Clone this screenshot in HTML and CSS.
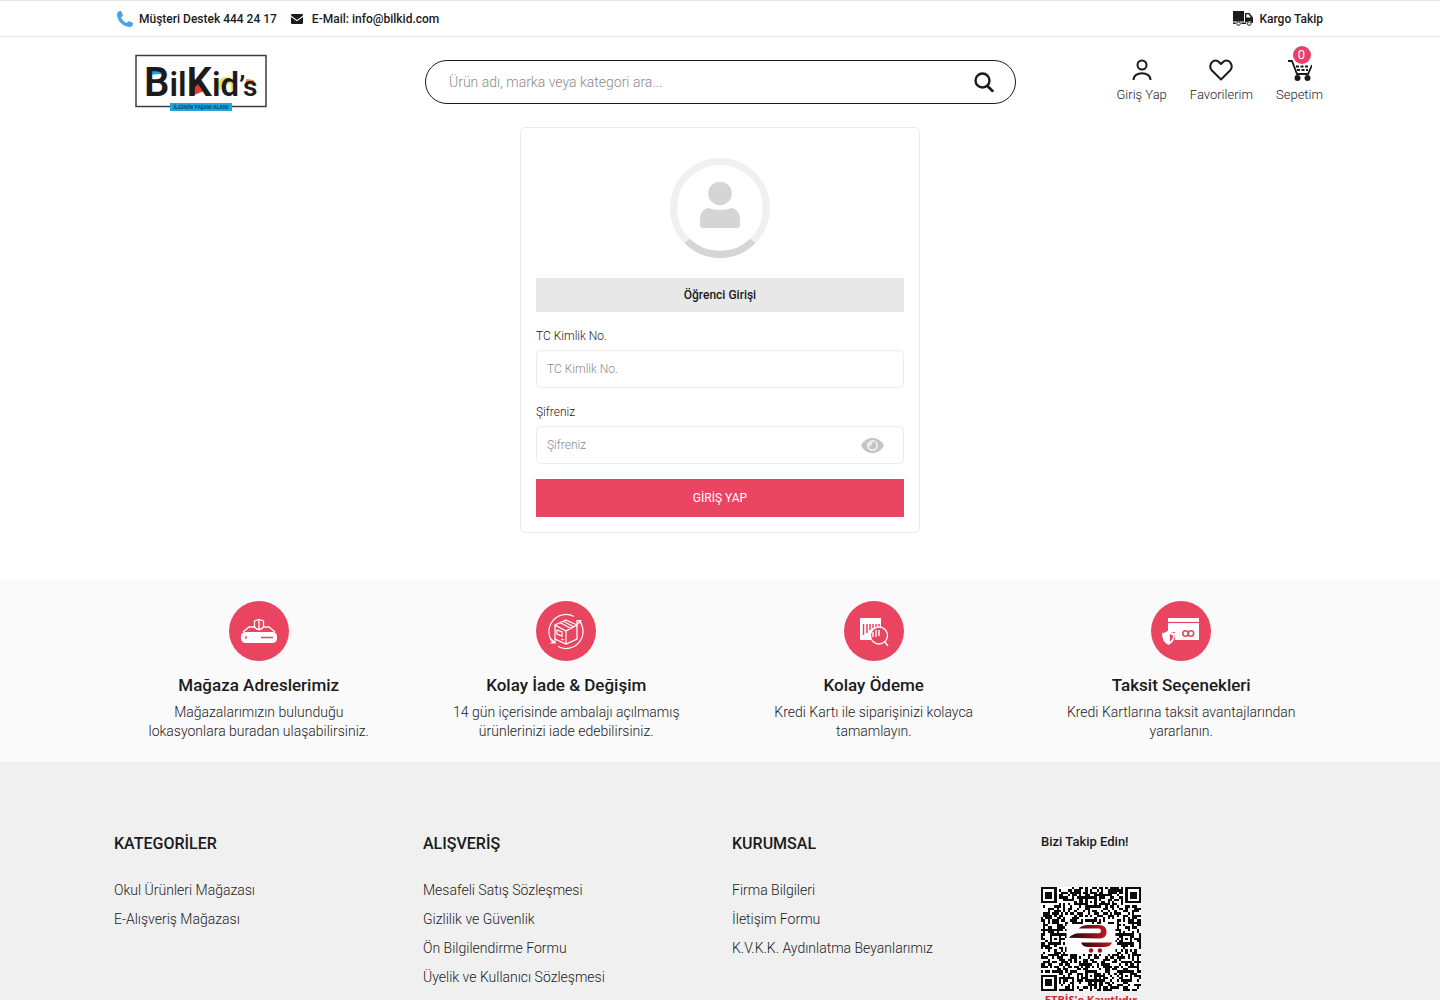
FILE: index.html
```html
<!DOCTYPE html>
<html lang="tr">
<head>
<meta charset="utf-8">
<meta name="viewport" content="width=device-width, initial-scale=1">
<title>BilKid's - Öğrenci Girişi</title>
<link rel="stylesheet" href="styles.css">
</head>
<body>
<div class="topbar">
  <div class="container topbar-inner">
    <a class="top-link" href="#">
      <svg width="16" height="16" viewBox="0 0 16 16" aria-hidden="true"><path d="M2.2.3C.8.9.1 2.100 0 3.500.2 9.900 6 15.600 12.400 16c1.500 0 2.700-.7 3.300-2.100l.3-1.100c.1-.5-.1-.8-.5-1l-3.300-1.500c-.4-.2-.8-.1-1.100.3l-1.400 1.500C7.300 11.100 5 8.800 4.100 6.400l1.500-1.300c.3-.3.4-.7.3-1.100L4.400.6C4.200.1 3.800-.1 3.300.1z" fill="#49a1ec"/></svg>
      <span>Müşteri Destek 444 24 17</span>
    </a>
    <a class="top-link top-mail" href="#">
      <svg width="12" height="10" viewBox="0 0 12 10" aria-hidden="true"><path d="M1 0h10a1 1 0 0 1 1 1v.5L6 6 0 1.500V1a1 1 0 0 1 1-1zM0 2.900l6 4.400 6-4.400V9a1 1 0 0 1-1 1H1a1 1 0 0 1-1-1z" fill="#1b1b1d"/></svg>
      <span>E-Mail: info@bilkid.com</span>
    </a>
    <a class="top-link top-cargo" href="#">
      <svg width="20" height="15" viewBox="0 0 20 15" aria-hidden="true"><path d="M0 0h11v10.500H0zM12 2h4.500L20 6.500V12h-1.300a2.500 2.500 0 0 0-4.400-1H12zM13.300 3.300v3.200h4.500l-2-3.200zM0 11.500h3l-.6 1.500H0zM8 11.500h5.500L13 13H8.600z" fill="#1b1b1d" fill-rule="evenodd"/><circle cx="5.500" cy="12.600" r="1.800" fill="#fff" stroke="#1b1b1d"/><circle cx="16.200" cy="12.600" r="1.800" fill="#fff" stroke="#1b1b1d"/></svg>
      <span>Kargo Takip</span>
    </a>
  </div>
</div>

<header class="container header">
  <a class="logo" href="#" aria-label="BilKid's">
    <svg width="132" height="57" viewBox="0 0 132 57" aria-hidden="true">
      <rect x="1" y="1.500" width="130" height="51" fill="#fff" stroke="#3d3d3f" stroke-width="1.500"/>
      <path d="M14 15q6-2 12 0v5l-12 1z" fill="#1ba7dc"/>
      <path d="M59 24l10 13-10 4z" fill="#e23a34"/>
      <circle cx="91" cy="31" r="8" fill="#f1e34a"/>
      <path d="M85 37q3-7 11-7v6l-6 5z" fill="#fff"/>
      <path d="M111 25l8 1-1 5-7-1z" fill="#f08a2c"/>
      <text class="logo-word" x="9" y="42"><tspan class="logo-cap">B</tspan>il<tspan class="logo-cap">K</tspan>id<tspan class="logo-end">’s</tspan></text>
      <rect x="35" y="49" width="62" height="8" fill="#1ba7dc"/>
      <text class="logo-tag" x="66" y="55" text-anchor="middle">İLGİNİN YAŞAM ALANI</text>
    </svg>
  </a>
  <form class="search">
    <input class="search-input" type="text" aria-label="Ürün ara" placeholder="Ürün adı, marka veya kategori ara...">
    <button class="search-button" type="button" aria-label="Ara">
      <svg width="20" height="20" viewBox="0 0 20 20" fill="none" stroke="#1b1b1d" aria-hidden="true"><circle cx="8.500" cy="8.500" r="7" stroke-width="2.400"/><path d="M13.500 14l5 5" stroke-width="2.600" stroke-linecap="round"/></svg>
    </button>
  </form>
  <nav class="actions">
    <a class="action" href="#">
      <svg width="20" height="22" viewBox="0 0 20 22" fill="none" stroke="#1b1b1d" stroke-width="2" aria-hidden="true"><circle cx="10" cy="6" r="4.500"/><path d="M1.500 21c0-9 17-9 17 0"/></svg>
      <span>Giriş Yap</span>
    </a>
    <a class="action" href="#">
      <svg width="24" height="22" viewBox="0 0 24 22" fill="none" stroke="#1b1b1d" stroke-width="2" stroke-linejoin="round" aria-hidden="true"><path d="M12 20.500L3.200 11.800C-1.500 6.500 3.800-1 9.600 2.700L12 5l2.400-2.300c5.800-3.700 11.100 3.800 6.400 9.100z"/></svg>
      <span>Favorilerim</span>
    </a>
    <a class="action" href="#">
      <span class="badge">0</span>
      <svg width="24" height="22" viewBox="0 0 24 22" fill="none" stroke="#1b1b1d" stroke-width="2" aria-hidden="true"><path d="M0 2h4l5 13h11l4-9" stroke-width="1.800"/><path d="M8 7.500h13M9 11h11" stroke-dasharray="3 1.500"/><circle cx="9.500" cy="19" r="2" fill="#1b1b1d"/><circle cx="19.500" cy="19" r="2" fill="#1b1b1d"/></svg>
      <span>Sepetim</span>
    </a>
  </nav>
</header>

<main class="login">
  <form class="card">
    <svg class="avatar" width="100" height="100" viewBox="0 0 100 100" aria-hidden="true">
      <circle cx="50" cy="50" r="46.500" fill="none" stroke="#f0f0f0" stroke-width="7"/>
      <path d="M17.100 82.900a46.500 46.500 0 0 0 65.800 0" fill="none" stroke="#d5d5d5" stroke-width="7"/>
      <circle cx="50" cy="35.500" r="11.800" fill="#d5d5d5"/>
      <path d="M38 50c4 1 7 2 12 2s8-1 12-2c5 1 8 6 8 11v6q0 3-3 3H33q-3 0-3-3v-6c0-5 3-10 8-11z" fill="#d5d5d5"/>
    </svg>
    <h1 class="card-title">Öğrenci Girişi</h1>
    <label class="label" for="tc">TC Kimlik No.</label>
    <input class="input" id="tc" type="text" placeholder="TC Kimlik No.">
    <label class="label" for="pass">Şifreniz</label>
    <div class="password">
      <input class="input" id="pass" type="password" placeholder="Şifreniz">
      <button class="eye" type="button" aria-label="Şifreyi göster">
        <svg width="23" height="15" viewBox="0 0 23 15" aria-hidden="true"><path d="M0 7.500C5-2.500 18-2.500 23 7.500 18 17.500 5 17.500 0 7.500z" fill="#c4c4c4"/><circle cx="11.500" cy="7.500" r="4.700" fill="#c4c4c4" stroke="#fff" stroke-width="1.300"/><path d="M8.800 8a2.800 2.800 0 0 1 2.500-3" fill="none" stroke="#fff" stroke-width="1.300"/></svg>
      </button>
    </div>
    <button class="submit" type="button">GİRİŞ YAP</button>
  </form>
</main>

<section class="features">
  <div class="container features-grid">
    <article class="feature">
      <svg width="60" height="60" viewBox="0 0 60 60" aria-hidden="true"><circle cx="30" cy="30" r="30" fill="#e94560"/><rect x="12" y="31" width="36" height="11" rx="4.500" fill="#fff"/><path d="M14 31l6-5h5M35 26h5l6 5M30 18.500l4.500 1.500v6q-2 2.500-4.500 2.500t-4.500-2.500v-6zM30 18v11" fill="none" stroke="#fff" stroke-width="1.300"/><path d="M32 36.500h12M17 35v3" stroke="#e94560" stroke-width="1.400"/></svg>
      <h2 class="feature-title">Mağaza Adreslerimiz</h2>
      <p class="feature-text">Mağazalarımızın bulunduğu<br>lokasyonlara buradan ulaşabilirsiniz.</p>
    </article>
    <article class="feature">
      <svg width="60" height="60" viewBox="0 0 60 60" fill="none" stroke="#fff" stroke-width="1.200" aria-hidden="true"><circle cx="30" cy="30" r="30" fill="#e94560" stroke="none"/><path d="M38 15.500a17 17 0 0 0-21 26M22 45.500a17 17 0 0 0 21-26M41 24v-4.500h4.500M41 23l4-3M19 37v5h-4.500M15 38l4 4"/><path d="M30 19l11 5-11 6-11-6zM19 24v14l11 5 11-5V24M30 30v13M24 21.500l11 6M27 20l11 6M21 29l5 2v4l-5-2zM25 38l3 1"/></svg>
      <h2 class="feature-title">Kolay İade &amp; Değişim</h2>
      <p class="feature-text">14 gün içerisinde ambalajı açılmamış<br>ürünlerinizi iade edebilirsiniz.</p>
    </article>
    <article class="feature">
      <svg width="60" height="60" viewBox="0 0 60 60" aria-hidden="true"><circle cx="30" cy="30" r="30" fill="#e94560"/><path d="M16 17h21v22H16z" fill="#fff"/><path d="M19.500 23v11M23 23v9M26 23v6M29 23v4M32 23v3M35 23v3" stroke="#e94560" stroke-width="1.500"/><circle cx="35" cy="34.500" r="8.500" fill="#e94560" stroke="#fff" stroke-width="1.300"/><path d="M29 31v5M32 29v7M35 29v6M41 41l3 4" stroke="#fff" stroke-width="1.400"/></svg>
      <h2 class="feature-title">Kolay Ödeme</h2>
      <p class="feature-text">Kredi Kartı ile siparişinizi kolayca<br>tamamlayın.</p>
    </article>
    <article class="feature">
      <svg width="60" height="60" viewBox="0 0 60 60" aria-hidden="true"><circle cx="30" cy="30" r="30" fill="#e94560"/><path d="M17 17h31v22H24V31H17z" fill="#fff"/><path d="M17 21.500h31" stroke="#e94560" stroke-width="1.200"/><path d="M11 32q4 0 6.500-3 2.500 3 6.500 3 0 9-6.500 12Q11 41 11 32z" fill="#fff"/><path d="M19 33l3 1.500q0 4-3 6z" fill="#e94560"/><g fill="none" stroke="#e94560" stroke-width="1.600"><circle cx="34.500" cy="32.500" r="2.700"/><circle cx="40" cy="32.500" r="2.700"/></g></svg>
      <h2 class="feature-title">Taksit Seçenekleri</h2>
      <p class="feature-text">Kredi Kartlarına taksit avantajlarından<br>yararlanın.</p>
    </article>
  </div>
</section>

<footer class="footer">
  <div class="container footer-grid">
    <section>
      <h3 class="footer-title">KATEGORİLER</h3>
      <ul class="links">
        <li><a href="#">Okul Ürünleri Mağazası</a></li>
        <li><a href="#">E-Alışveriş Mağazası</a></li>
      </ul>
    </section>
    <section>
      <h3 class="footer-title">ALIŞVERİŞ</h3>
      <ul class="links">
        <li><a href="#">Mesafeli Satış Sözleşmesi</a></li>
        <li><a href="#">Gizlilik ve Güvenlik</a></li>
        <li><a href="#">Ön Bilgilendirme Formu</a></li>
        <li><a href="#">Üyelik ve Kullanıcı Sözleşmesi</a></li>
      </ul>
    </section>
    <section>
      <h3 class="footer-title">KURUMSAL</h3>
      <ul class="links">
        <li><a href="#">Firma Bilgileri</a></li>
        <li><a href="#">İletişim Formu</a></li>
        <li><a href="#">K.V.K.K. Aydınlatma Beyanlarımız</a></li>
      </ul>
    </section>
    <section>
      <h3 class="follow-title">Bizi Takip Edin!</h3>
      <a class="etbis" href="#" aria-label="ETBİS'e Kayıtlıdır">
        <svg width="100" height="104" viewBox="0 0 45 45" preserveAspectRatio="none" aria-hidden="true">
          <defs><linearGradient id="cart"><stop offset="0" stop-color="#1d0b0d"/><stop offset="1" stop-color="#c3151f"/></linearGradient></defs>
          <rect width="45" height="45" fill="#fff"/>
          <path id="qr" fill="#0b0b0b" shape-rendering="crispEdges"/>
          <rect x="11.500" y="16" width="22" height="13" fill="#fff"/>
          <path d="M12.500 22q2-2 4.500-2h9q1 0 1-1t-1-1h-9q1.500-1.600 4-1.600h5q3.500 0 3.500 3T26 22.300z" fill="url(#cart)"/>
          <path d="M18 24h14q-1 2-3.500 2H21q-2 0-3-2z" fill="url(#cart)"/>
          <circle cx="22.500" cy="27.500" r="1" fill="#a3141d"/><circle cx="26.500" cy="27.500" r="1" fill="#a3141d"/>
        </svg>
        <span class="etbis-text">ETBİS'e Kayıtlıdır</span>
      </a>
    </section>
  </div>
</footer>
<script src="qr.js"></script>
</body>
</html>
```
FILE: styles.css
```css
* { box-sizing: border-box; }

body {
  margin: 0;
  background: #fff;
  color: #1b1b1d;
  font-family: Roboto, "Liberation Sans", sans-serif;
  font-size: 14px;
  line-height: 20px;
}

a { color: inherit; text-decoration: none; }
svg { display: block; flex: none; }
h1, h2, h3, p, ul { margin: 0; padding: 0; }
ul { list-style: none; }
input, button { font: inherit; }
button { border: 0; padding: 0; background: none; cursor: pointer; }

.container {
  width: 100%;
  max-width: 1230px;
  margin: 0 auto;
  padding: 0 12px;
}

/* Top bar */
.topbar {
  border-top: 1px solid #e6e6e6;
  border-bottom: 1px solid #e6e6e6;
}
.topbar-inner {
  display: flex;
  align-items: center;
  gap: 14px;
  height: 35px;
  font-size: 12px;
  font-weight: 500;
}
.top-link { display: flex; align-items: center; gap: 6px; }
.top-mail { gap: 9px; }
.top-cargo { margin-left: auto; }

/* Header */
.header {
  display: grid;
  grid-template-columns: 308px minmax(0, 591px) 1fr;
  align-items: center;
  height: 90px;
}
.logo { padding-left: 18px; }
.logo-word { font: 600 33px Roboto, sans-serif; fill: #1b1b1d; }
.logo-cap { font-size: 40px; }
.logo-end { font-size: 28px; }
.logo-tag { font: 700 5px "Open Sans", sans-serif; fill: #17405c; }

.search {
  display: flex;
  align-items: center;
  height: 44px;
  border: 1px solid #1b1b1d;
  border-radius: 22px;
  padding: 0 21px 0 23px;
}
.search-input {
  flex: 1;
  min-width: 0;
  border: 0;
  padding: 0;
  outline: 0;
  background: none;
  font-weight: 300;
}
.search-input::placeholder { color: #8b8b8b; opacity: 1; }

.actions { display: flex; justify-content: flex-end; gap: 23px; }
.action {
  position: relative;
  display: flex;
  flex-direction: column;
  align-items: center;
  gap: 4px;
  font-size: 13px;
  font-weight: 300;
}
.badge {
  position: absolute;
  top: -13px;
  left: 50%;
  width: 18px;
  height: 18px;
  margin-left: -7px;
  border-radius: 50%;
  background: #e94069;
  color: #fff;
  font-weight: 400;
  line-height: 18px;
  text-align: center;
}

/* Login card */
.login { padding: 0 12px 47px; }
.card {
  display: flex;
  flex-direction: column;
  max-width: 400px;
  margin: 0 auto;
  border: 1px solid #ececec;
  border-radius: 5px;
  padding: 30px 15px 15px;
}
.avatar { align-self: center; }
.card-title {
  margin: 20px 0 14px;
  background: #e8e8e8;
  font-size: 12px;
  font-weight: 500;
  line-height: 34px;
  text-align: center;
}
.label { margin-bottom: 4px; font-size: 12px; font-weight: 300; }
.input {
  width: 100%;
  height: 38px;
  border: 1px solid #ececec;
  border-radius: 5px;
  padding: 0 10px;
  outline: 0;
  font-size: 12px;
  font-weight: 300;
}
.input::placeholder { color: #8b8b8b; opacity: 1; }
.input + .label { margin-top: 14px; }
.password { position: relative; }
.eye { position: absolute; top: 12px; right: 20px; }
.submit {
  height: 38px;
  margin-top: 15px;
  background: #e94560;
  color: #fff;
  font-size: 12px;
}

/* Features */
.features { padding: 21px 0; background: #fafafa; }
.features-grid {
  display: grid;
  grid-template-columns: repeat(4, 1fr);
  padding: 0;
}
.feature {
  display: flex;
  flex-direction: column;
  align-items: center;
  text-align: center;
}
.feature-title {
  margin: 12px 0 6px;
  font-size: 17px;
  font-weight: 500;
  line-height: 24px;
}
.feature-text { font-weight: 300; line-height: 19px; }

/* Footer */
.footer { padding: 70px 0 60px; background: #f0f0f0; }
.footer-grid {
  display: grid;
  grid-template-columns: repeat(4, 1fr);
  gap: 15px;
  padding: 0 0 0 9px;
}
.footer-title {
  margin-bottom: 24px;
  font-size: 16px;
  font-weight: 500;
  line-height: 24px;
}
.links { display: grid; gap: 9px; font-weight: 300; }
.follow-title {
  margin-bottom: 35px;
  font-size: 13px;
  font-weight: 500;
}
.etbis { display: block; width: 100px; }
.etbis-text {
  display: block;
  color: #d3272d;
  font: 700 11px/18px "Open Sans", sans-serif;
  text-align: center;
  white-space: nowrap;
}
```
FILE: qr.js
```js
// Fills the QR symbol: 45 x 45 modules with finder and alignment patterns.
(function () {
  var size = 45, seed = 20731, d = "";
  function ring(x, y, cx, cy) {
    return Math.max(Math.abs(x - cx), Math.abs(y - cy));
  }
  function next() {
    seed = (seed * 1103515245 + 12345) % 2147483648;
    return seed / 2147483648;
  }
  var finders = [[3, 3], [41, 3], [3, 41]];
  var aligns = [[22, 6], [6, 22], [38, 22], [22, 38], [38, 38]];
  for (var y = 0; y < size; y++) {
    for (var x = 0; x < size; x++) {
      var dark = next() > 0.48;
      aligns.forEach(function (p) {
        var r = ring(x, y, p[0], p[1]);
        if (r <= 2) dark = r !== 1;
      });
      finders.forEach(function (p) {
        var r = ring(x, y, p[0], p[1]);
        if (r <= 4) dark = r !== 2 && r !== 4;
      });
      if (dark) d += "M" + x + " " + y + "h1v1h-1z";
    }
  }
  document.getElementById("qr").setAttribute("d", d);
})();
```
